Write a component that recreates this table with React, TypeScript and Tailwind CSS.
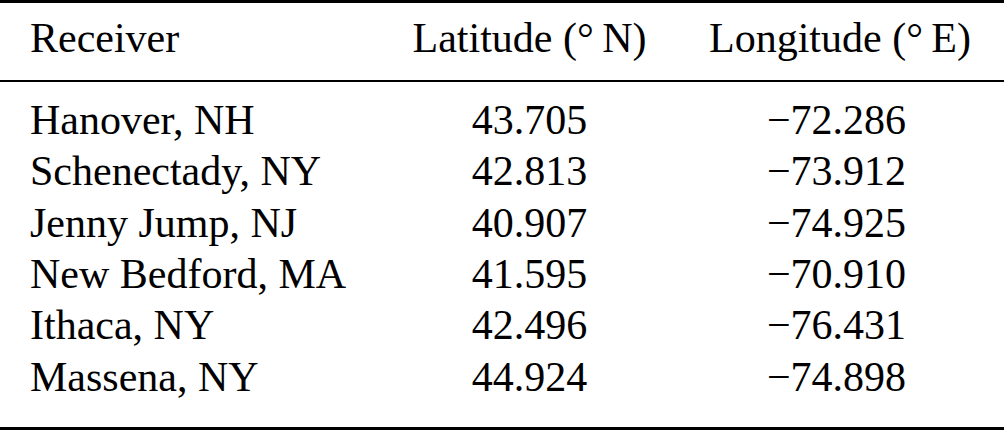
const rows = [
  { site: "Hanover, NH", lat: "43.705", lon: "\u221272.286" },
  { site: "Schenectady, NY", lat: "42.813", lon: "\u221273.912" },
  { site: "Jenny Jump, NJ", lat: "40.907", lon: "\u221274.925" },
  { site: "New Bedford, MA", lat: "41.595", lon: "\u221270.910" },
  { site: "Ithaca, NY", lat: "42.496", lon: "\u221276.431" },
  { site: "Massena, NY", lat: "44.924", lon: "\u221274.898" },
];

export default function App() {
  return (
    <div className="w-[1004px] h-[430px] bg-white text-black font-[family-name:Times_New_Roman,Times,serif] text-[42px] leading-[51.3px]">
      <div className="h-[3px] bg-black" />

      {/* header */}
      <div className="grid grid-cols-[400px_259px_345px] mt-[10.2px]">
        <div className="pl-[30px]">Receiver</div>
        <div className="text-center">Latitude (°&#8201;N)</div>
        <div className="text-center pl-[17px]">Longitude (°&#8201;E)</div>
      </div>

      <div className="h-[2px] bg-black mt-[16px]" />

      {/* body */}
      <div className="mt-[12.7px]">
        {rows.map((r) => (
          <div key={r.site} className="grid grid-cols-[400px_259px_345px]">
            <div className="pl-[30px]">{r.site}</div>
            <div className="text-center">{r.lat}</div>
            <div className="text-center pl-[17px] pr-[7px]">{r.lon}</div>
          </div>
        ))}
      </div>

      <div className="h-[3px] bg-black mt-[24px]" />
    </div>
  );
}
